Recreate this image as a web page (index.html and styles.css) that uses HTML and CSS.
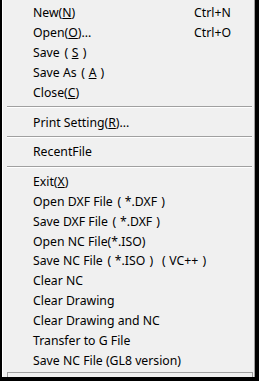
FILE: index.html
```html
<!DOCTYPE html>
<html>
<head>
<meta charset="utf-8">
<link rel="stylesheet" href="styles.css">
</head>
<body>
<div class="frame">
  <div class="menu">
    <div class="item"><span class="label">New(<u>N</u>)</span><span class="key">Ctrl+N</span></div>
    <div class="item"><span class="label">Open(<u>O</u>)...</span><span class="key">Ctrl+O</span></div>
    <div class="item"><span class="label">Save<span class="pl">(</span><u>S</u><span class="pr">)</span></span></div>
    <div class="item"><span class="label">Save As<span class="pl">(</span><u>A</u><span class="pr">)</span></span></div>
    <div class="item"><span class="label">Close(<u>C</u>)</span></div>
    <div class="sep"></div>
    <div class="item"><span class="label">Print Setting(<u>R</u>)...</span></div>
    <div class="sep"></div>
    <div class="item"><span class="label">RecentFile</span></div>
    <div class="sep"></div>
    <div class="item"><span class="label">Exit(<u>X</u>)</span></div>
    <div class="item"><span class="label">Open DXF File<span class="pl">(</span>*.DXF<span class="pr">)</span></span></div>
    <div class="item"><span class="label">Save DXF File<span class="pl">(</span>*.DXF<span class="pr">)</span></span></div>
    <div class="item"><span class="label">Open NC File(*.ISO)</span></div>
    <div class="item"><span class="label">Save NC File<span class="pl">(</span>*.ISO<span class="pr">)</span><span class="pl">(</span>VC++<span class="pr">)</span></span></div>
    <div class="item"><span class="label">Clear NC</span></div>
    <div class="item"><span class="label">Clear Drawing</span></div>
    <div class="item"><span class="label">Clear Drawing and NC</span></div>
    <div class="item"><span class="label">Transfer to G File</span></div>
    <div class="item"><span class="label">Save NC File (GL8 version)</span></div>
    <div class="cut"></div>
  </div>
</div>
</body>
</html>
```
FILE: styles.css
```css
html, body {
  margin: 0;
  padding: 0;
  background: #000;
}
.frame {
  width: 259px;
  height: 381px;
  background: #000;
  display: flex;
  overflow: hidden;
}
.menu {
  margin: 0 4px 4px 2px;
  flex: 1;
  background: #f0f0f0;
  border-left: 1px solid #ffffff;
  border-right: 1px solid #a0a0a0;
  padding-top: 3px;
  display: flex;
  flex-direction: column;
  font-family: "Noto Sans", "Noto Sans CJK SC", sans-serif;
  font-size: 12.25px;
  color: #000;
  overflow: hidden;
}
.item {
  height: 20px;
  display: flex;
  align-items: center;
  padding: 0 15px 0 30px;
  white-space: nowrap;
}
.label {
  flex: 1;
}
.key {
  width: 45px;
}
.pl, .pr {
  display: inline-block;
  width: 12px;
  text-align: center;
}
.pl {
  padding-left: 1px;
  box-sizing: border-box;
}
u {
  text-decoration: underline;
  text-underline-offset: 1px;
}
.sep {
  height: 10px;
  margin: 0 2px 0 4px;
  display: flex;
  flex-direction: column;
  padding-top: 4px;
  box-sizing: border-box;
}
.sep::before {
  content: "";
  display: block;
  height: 1px;
  background: #a0a0a0;
}
.sep::after {
  content: "";
  display: block;
  height: 1px;
  background: #ffffff;
}
.cut {
  margin: 2px 1px 0 4px;
  height: 4px;
  border: 1px solid #a0a0a0;
  border-bottom: none;
}
```
